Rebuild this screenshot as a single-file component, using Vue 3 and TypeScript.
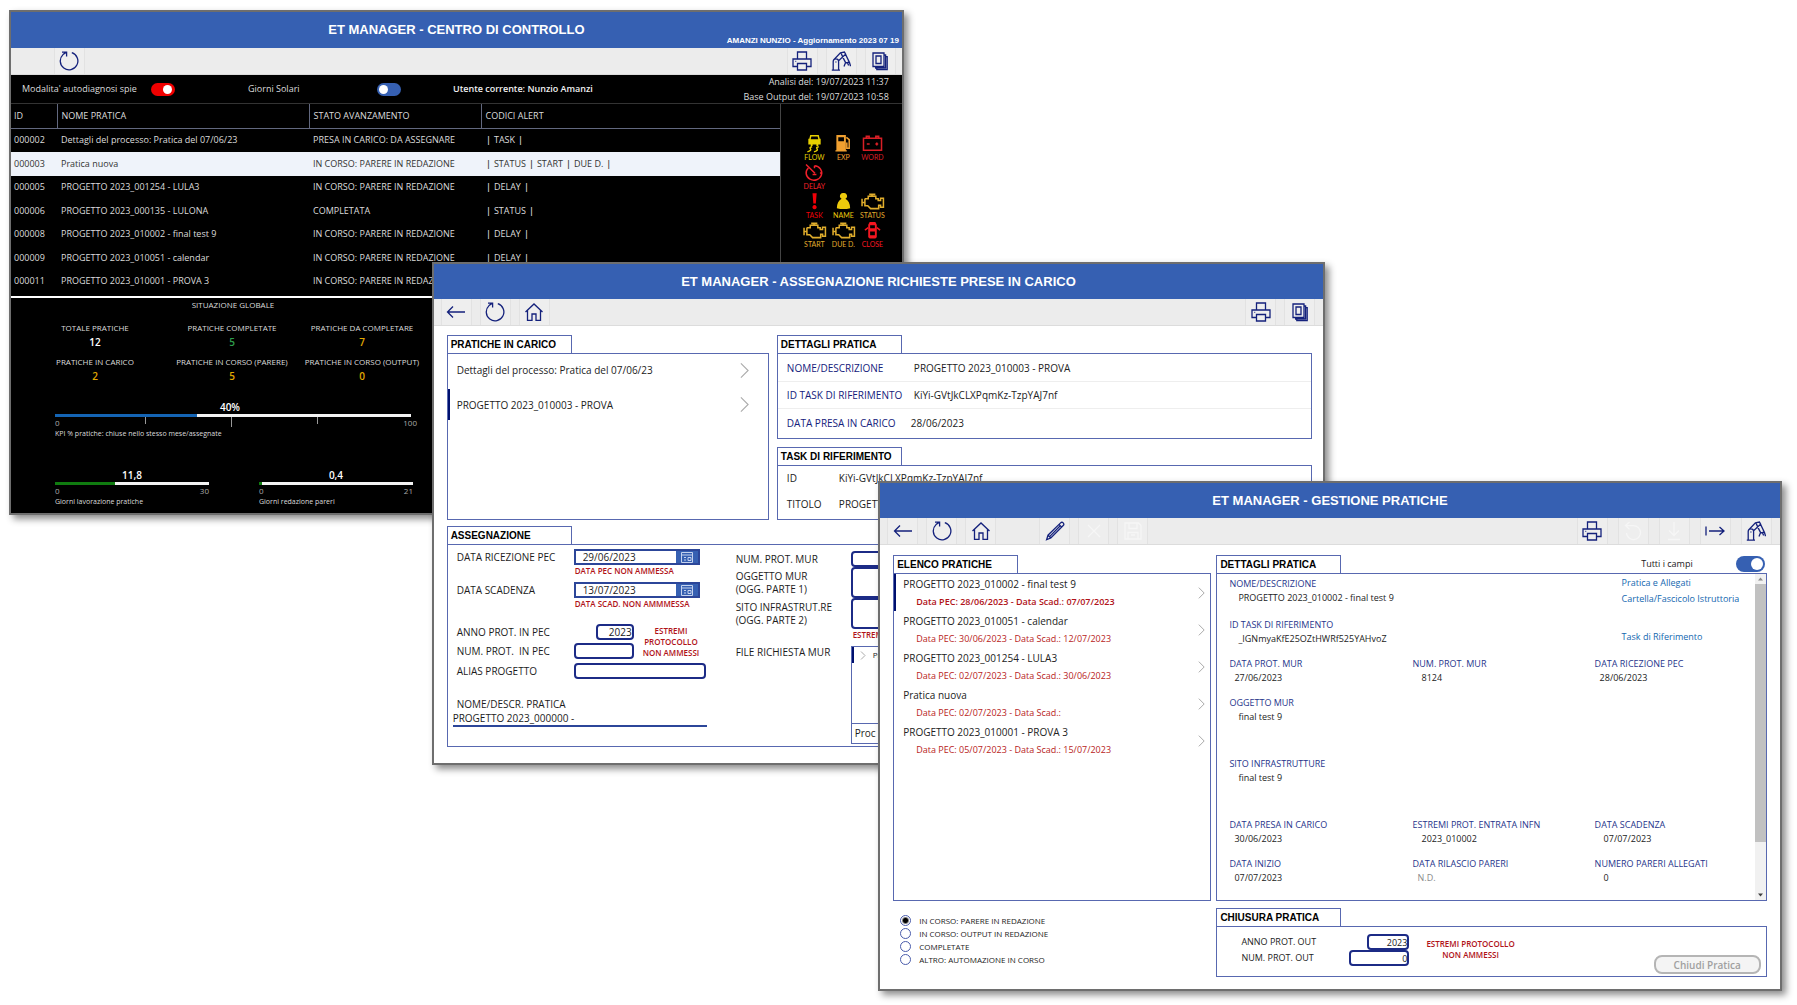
<script setup lang="ts">
import { ref } from 'vue'

const icons: Record<string, string> = {
  back: 'M19 10H1.5M7 4.5L1.5 10L7 15.5',
  refresh: 'M3 1.2h4.6v4.4M7.4 1.4Q5.5 2.3 4 3.6A8.8 8.8 0 1 0 12.8 1.6',
  home: 'M1.5 10L10 2L18.5 10M3.5 8.3V18.3H8V12H12V18.3H16.5V8.3',
  print: 'M5.5 8V1H14.5V8M5.5 15.5H1V8H19V15.5H14.5M5.5 12.5H14.5V19H5.5ZM3.4 10.3h.8',
  robot: 'M.8 19.2H9M2.2 19V10.6a2.7 2.7 0 0 1 5.4 0V19M4.9 10.6v1M2.6 9L9.4 1.8L13.4 1L14.6 3.2L7.6 9.8M9.8 1.8L11.6 5.6M11.4 5.4L14.6 11.6M14.4 3L18.4 11.4M14.2 11.8L18.6 11.2M14.6 11.6L13 15.4M16.4 11.6L17.6 14.6M18.4 11.2L19.6 15.2',
  pages: 'M3 2H14V15.5H3ZM6 5H11V12.5H6ZM14 4H15.6V17H5M15.6 5.6H17.2V18.6H6.8V17',
  edit: 'M1.6 18.6L3 14.2L15.6 1.9a1.8 1.8 0 0 1 2.6 2.6L5.8 17ZM3 14.2L5.8 17M14 3.4L16.7 6.1M4.6 15.6L15 5',
  close: 'M4 4L16 16M16 4L4 16',
  save: 'M2 2H15.5L18 4.5V18H2ZM6 2V7.5H14V2M5 18V11.5H15V18M8 14h4',
  undo: 'M6.5 1L2.5 4.6L6.5 8.2M2.5 4.6H10.5a7 7 0 1 1-7 7.4',
  download: 'M10 1V14.5M5 9.5L10 14.5L15 9.5M4 18.5H16',
  exit: 'M1 5.5V14.5M4 10H19M14.5 6L19 10L14.5 14',
}

interface Tool { icon: string; label: string; off?: boolean; gap?: boolean }
const print: Tool = { icon: 'print', label: 'Stampa' }
const robot: Tool = { icon: 'robot', label: 'Automazione' }
const pages: Tool = { icon: 'pages', label: 'Documenti' }
const refresh: Tool = { icon: 'refresh', label: 'Aggiorna' }
const nav: Tool[] = [{ icon: 'back', label: 'Indietro' }, refresh, { icon: 'home', label: 'Home' }]
const controlTools: Tool[] = [print, robot, pages]
const assignTools: Tool[] = [print, pages]
const manageTools: Tool[] = [
  ...nav,
  { icon: 'edit', label: 'Modifica', gap: true },
  { icon: 'close', label: 'Annulla', off: true },
  { icon: 'save', label: 'Salva', off: true },
]
const manageRight: Tool[] = [
  print,
  { icon: 'undo', label: 'Ripristina', off: true },
  { icon: 'download', label: 'Scarica', off: true },
  { icon: 'exit', label: 'Esci' },
  robot,
]

const rows = [
  { id: '000002', name: 'Dettagli del processo: Pratica del 07/06/23', state: 'PRESA IN CARICO: DA ASSEGNARE', codes: ['TASK'] },
  { id: '000003', name: 'Pratica nuova', state: 'IN CORSO: PARERE IN REDAZIONE', codes: ['STATUS', 'START', 'DUE D.'] },
  { id: '000005', name: 'PROGETTO 2023_001254 - LULA3', state: 'IN CORSO: PARERE IN REDAZIONE', codes: ['DELAY'] },
  { id: '000006', name: 'PROGETTO 2023_000135 - LULONA', state: 'COMPLETATA', codes: ['STATUS'] },
  { id: '000008', name: 'PROGETTO 2023_010002 - final test 9', state: 'IN CORSO: PARERE IN REDAZIONE', codes: ['DELAY'] },
  { id: '000009', name: 'PROGETTO 2023_010051 - calendar', state: 'IN CORSO: PARERE IN REDAZIONE', codes: ['DELAY'] },
  { id: '000011', name: 'PROGETTO 2023_010001 - PROVA 3', state: 'IN CORSO: PARERE IN REDAZIONE', codes: [] },
]

const engine = 'M5 7H8V4.5H16V7H18.5V9H21V6.5H24V16H21V14H19V17.5H10.5L7.5 14.5H4.5V7.6ZM1.5 7V15M1.5 11H4.5M9 2.5H15.5M12 2.5V4.5'
const lamps = [
  { name: 'FLOW', color: '#e6cf00', fill: 'M8 1H17L18 5H19V11H16.5V12.5H14.5V11H10.5V12.5H8.5V11H6V5H7ZM8.5 5.5H16.5L15.8 2.5H9.2Z', line: 'M10 13.5C4 15 13 16 5 18.8M17 13.5C11 15 20 16 12 18.8' },
  { name: 'EXP', color: '#f0a030', fill: 'M5 1H15V17H16V18.5H4V17H5ZM7 3.5V7.5H13V3.5Z', line: 'M15.5 3.5L18.5 6V15H16V9' },
  { name: 'WORD', color: '#d81f26', fill: '', line: 'M3 4.5H22V17H3ZM6 4V2.5H9V4M16 4V2.5H19V4M6.5 10.5H9.5M15.5 10.5H18.5M17 9V12' },
  { name: 'DELAY', color: '#f0202a', fill: '', line: 'M6 5.2A8.2 7.6 0 1 0 12.5 2.9M13 10.8L3.6 1.6M12.5 3V5.4M20.5 10.5H18.2M10.5 12.2h4' },
  null,
  null,
  { name: 'TASK', color: '#f00008', fill: 'M10.4 1.2H14.8L13.9 12H11.3ZM12.6 13.8A2.2 2.2 0 1 1 12.5 13.8Z', line: '' },
  { name: 'NAME', color: '#ecc90c', fill: 'M12.5 1A3.2 3.2 0 0 1 14.5 7C17.5 8.5 19.5 12 19.5 17Q12.5 19 5.5 17C5.5 12 7.5 8.5 10.5 7A3.2 3.2 0 0 1 12.5 1Z', line: '' },
  { name: 'STATUS', color: '#e0ad2c', fill: '', line: engine },
  { name: 'START', color: '#e0ad2c', fill: '', line: engine },
  { name: 'DUE D.', color: '#e0ad2c', fill: '', line: engine },
  { name: 'CLOSE', color: '#f41620', fill: 'M9.5 1H15.5L17 4V17L15.5 18.5H9.5L8 17V4ZM10 4.5V7.5H15V4.5ZM10 11V15H15V11Z', line: 'M8 7L4.5 9.5M17 7L20.5 9.5' },
]

const totals = [
  { label: 'TOTALE PRATICHE', value: '12', tone: 'plain' },
  { label: 'PRATICHE COMPLETATE', value: '5', tone: 'good' },
  { label: 'PRATICHE DA COMPLETARE', value: '7', tone: 'warn' },
  { label: 'PRATICHE IN CARICO', value: '2', tone: 'warn' },
  { label: 'PRATICHE IN CORSO (PARERE)', value: '5', tone: 'warn' },
  { label: 'PRATICHE IN CORSO (OUTPUT)', value: '0', tone: 'warn' },
]
const meters = [
  { value: '11,8', share: 39, max: '30', label: 'Giorni lavorazione pratiche' },
  { value: '0,4', share: 2, max: '21', label: 'Giorni redazione pareri' },
]

const practices = [
  { name: 'PROGETTO 2023_010002 - final test 9', dates: 'Data PEC: 28/06/2023 - Data Scad.: 07/07/2023' },
  { name: 'PROGETTO 2023_010051 - calendar', dates: 'Data PEC: 30/06/2023 - Data Scad.: 12/07/2023' },
  { name: 'PROGETTO 2023_001254 - LULA3', dates: 'Data PEC: 02/07/2023 - Data Scad.: 30/06/2023' },
  { name: 'Pratica nuova', dates: 'Data PEC: 02/07/2023 - Data Scad.:' },
  { name: 'PROGETTO 2023_010001 - PROVA 3', dates: 'Data PEC: 05/07/2023 - Data Scad.: 15/07/2023' },
]
const states = ['IN CORSO: PARERE IN REDAZIONE', 'IN CORSO: OUTPUT IN REDAZIONE', 'COMPLETATE', 'ALTRO: AUTOMAZIONE IN CORSO']

const selfCheck = ref(true)
const solarDays = ref(false)
const allFields = ref(true)
const picked = ref(states[0])
const pecDate = ref('29/06/2023')
const dueDate = ref('13/07/2023')
const yearIn = ref('2023')
const yearOut = ref('2023')
const numberOut = ref('0')
</script>

<template>
  <main class="desktop">
    <!-- Centro di controllo -->
    <section class="window control">
      <header class="title-bar">
        <h1>ET MANAGER - CENTRO DI CONTROLLO</h1>
        <span class="release">AMANZI NUNZIO - Aggiornamento 2023 07 19</span>
      </header>
      <div class="toolbar">
        <button class="tool" :aria-label="refresh.label"><svg viewBox="0 0 20 20"><path :d="icons.refresh" /></svg></button>
        <span class="spring"></span>
        <button v-for="t in controlTools" :key="t.icon" class="tool" :aria-label="t.label"><svg viewBox="0 0 20 20"><path :d="icons[t.icon]" /></svg></button>
      </div>
      <div class="info">
        <label class="info-check" for="self">Modalita' autodiagnosi spie</label>
        <input id="self" v-model="selfCheck" class="toggle alarm" type="checkbox">
        <label class="info-days" for="solar">Giorni Solari</label>
        <input id="solar" v-model="solarDays" class="toggle" type="checkbox">
        <strong class="user">Utente corrente: Nunzio Amanzi</strong>
        <p class="stamps">Analisi del: 19/07/2023 11:37<br>Base Output del: 19/07/2023 10:58</p>
      </div>
      <div class="board">
        <table class="grid">
          <colgroup><col class="c-id"><col class="c-name"><col class="c-state"><col></colgroup>
          <thead><tr><th>ID</th><th>NOME PRATICA</th><th>STATO AVANZAMENTO</th><th>CODICI ALERT</th></tr></thead>
          <tbody>
            <tr v-for="(r, i) in rows" :key="r.id" :class="{ chosen: i === 1 }">
              <td>{{ r.id }}</td><td>{{ r.name }}</td><td>{{ r.state }}</td>
              <td><span v-if="r.codes.length" class="codes"><b>|</b><template v-for="c in r.codes" :key="c"><span>{{ c }}</span><b>|</b></template></span></td>
            </tr>
          </tbody>
        </table>
        <div class="lamps">
          <div v-for="(l, i) in lamps" :key="i" class="lamp">
            <template v-if="l">
              <svg viewBox="0 0 25 20" :fill="l.color" :stroke="l.color">
                <path v-if="l.fill" :d="l.fill" fill-rule="evenodd" stroke="none" />
                <path v-if="l.line" :d="l.line" fill="none" stroke-width="1.6" />
              </svg>
              <span :style="{ color: l.color }">{{ l.name }}</span>
            </template>
          </div>
        </div>
      </div>
      <div class="summary">
        <h2>SITUAZIONE GLOBALE</h2>
        <dl class="totals">
          <div v-for="t in totals" :key="t.label"><dt>{{ t.label }}</dt><dd :class="t.tone">{{ t.value }}</dd></div>
        </dl>
        <div class="meter kpi">
          <b>40%</b>
          <div class="track"><i class="fill" :style="{ width: '40%' }"></i></div>
          <div class="scale"><span>0</span><i></i><i class="mid"></i><i></i><span>100</span></div>
          <p>KPI % pratiche: chiuse nello stesso mese/assegnate</p>
        </div>
        <div class="pair">
          <div v-for="m in meters" :key="m.label" class="meter">
            <b>{{ m.value }}</b>
            <div class="track"><i class="fill green" :style="{ width: m.share + '%' }"></i></div>
            <div class="scale"><span>0</span><span>{{ m.max }}</span></div>
            <p>{{ m.label }}</p>
          </div>
        </div>
      </div>
    </section>

    <!-- Assegnazione richieste -->
    <section class="window assign">
      <header class="title-bar"><h1>ET MANAGER - ASSEGNAZIONE RICHIESTE PRESE IN CARICO</h1></header>
      <div class="toolbar">
        <button v-for="t in nav" :key="t.icon" class="tool" :aria-label="t.label"><svg viewBox="0 0 20 20"><path :d="icons[t.icon]" /></svg></button>
        <span class="spring"></span>
        <button v-for="t in assignTools" :key="t.icon" class="tool" :aria-label="t.label"><svg viewBox="0 0 20 20"><path :d="icons[t.icon]" /></svg></button>
      </div>
      <div class="body">
        <div class="split">
          <section class="panel">
            <h2 class="tab">PRATICHE IN CARICO</h2>
            <ul class="box taken">
              <li>Dettagli del processo: Pratica del 07/06/23<svg class="chevron" viewBox="0 0 10 18"><path d="M1 1L9 9L1 17" /></svg></li>
              <li class="on">PROGETTO 2023_010003 - PROVA<svg class="chevron" viewBox="0 0 10 18"><path d="M1 1L9 9L1 17" /></svg></li>
            </ul>
          </section>
          <div class="stack">
            <section class="panel">
              <h2 class="tab">DETTAGLI PRATICA</h2>
              <dl class="box facts">
                <div><dt>NOME/DESCRIZIONE</dt><dd>PROGETTO 2023_010003 - PROVA</dd></div>
                <div><dt>ID TASK DI RIFERIMENTO</dt><dd>KiYi-GVtJkCLXPqmKz-TzpYAJ7nf</dd></div>
                <div><dt>DATA PRESA IN CARICO</dt><dd>28/06/2023</dd></div>
              </dl>
            </section>
            <section class="panel">
              <h2 class="tab">TASK DI RIFERIMENTO</h2>
              <dl class="box task">
                <div><dt>ID</dt><dd>KiYi-GVtJkCLXPqmKz-TzpYAJ7nf</dd></div>
                <div><dt>TITOLO</dt><dd>PROGETTO</dd></div>
              </dl>
            </section>
          </div>
        </div>
        <section class="panel">
          <h2 class="tab">ASSEGNAZIONE</h2>
          <form class="box form" @submit.prevent>
            <div class="form-left">
              <div class="field">
                <label for="pec">DATA RICEZIONE PEC</label>
                <span class="date"><input id="pec" v-model="pecDate" type="text"><button type="button" aria-label="Calendario"><svg viewBox="0 0 12 11"><path d="M.5.5H11.5V10.5H.5ZM.5 3H11.5M3 5.5H5M7 5.5H10V8.5H7ZM3 8H5" /></svg></button></span>
              </div>
              <p class="error">DATA PEC NON AMMESSA</p>
              <div class="field">
                <label for="due">DATA SCADENZA</label>
                <span class="date"><input id="due" v-model="dueDate" type="text"><button type="button" aria-label="Calendario"><svg viewBox="0 0 12 11"><path d="M.5.5H11.5V10.5H.5ZM.5 3H11.5M3 5.5H5M7 5.5H10V8.5H7ZM3 8H5" /></svg></button></span>
              </div>
              <p class="error">DATA SCAD. NON AMMMESSA</p>
              <div class="protocol">
                <div class="protocol-fields">
                  <div class="field"><label for="yin">ANNO PROT. IN PEC</label><input id="yin" v-model="yearIn" class="text year" type="text"></div>
                  <div class="field"><label for="nin">NUM. PROT.&nbsp; IN PEC</label><input id="nin" class="text number" type="text"></div>
                </div>
                <p class="error centred">ESTREMI<br>PROTOCOLLO<br>NON AMMESSI</p>
              </div>
              <div class="field"><label for="alias">ALIAS PROGETTO</label><input id="alias" class="text alias" type="text"></div>
              <p class="caption">NOME/DESCR. PRATICA</p>
              <p class="result">PROGETTO 2023_000000 -</p>
            </div>
            <div class="form-right">
              <div class="field"><label for="nmur">NUM. PROT. MUR</label><input id="nmur" class="text" type="text"></div>
              <div class="field tall"><label for="omur">OGGETTO MUR<br>(OGG. PARTE 1)</label><textarea id="omur" class="text"></textarea></div>
              <div class="field tall"><label for="site">SITO INFRASTRUT.RE<br>(OGG. PARTE 2)</label><textarea id="site" class="text"></textarea></div>
              <p class="error">ESTREMI</p>
              <div class="field files">
                <span class="label">FILE RICHIESTA MUR</span>
                <div class="file-box">
                  <div class="file"><svg class="chevron" viewBox="0 0 10 18"><path d="M1 1L9 9L1 17" /></svg>Pr</div>
                  <div class="file-foot">Proc</div>
                </div>
              </div>
            </div>
          </form>
        </section>
      </div>
    </section>

    <!-- Gestione pratiche -->
    <section class="window manage">
      <header class="title-bar"><h1>ET MANAGER - GESTIONE PRATICHE</h1></header>
      <div class="toolbar">
        <button v-for="t in manageTools" :key="t.icon" class="tool" :class="{ off: t.off, apart: t.gap }" :disabled="t.off" :aria-label="t.label"><svg viewBox="0 0 20 20"><path :d="icons[t.icon]" /></svg></button>
        <span class="spring"></span>
        <button v-for="t in manageRight" :key="t.icon" class="tool" :class="{ off: t.off }" :disabled="t.off" :aria-label="t.label"><svg viewBox="0 0 20 20"><path :d="icons[t.icon]" /></svg></button>
      </div>
      <div class="body split">
        <div>
          <section class="panel">
            <h2 class="tab">ELENCO PRATICHE</h2>
            <ul class="box practices">
              <li v-for="(p, i) in practices" :key="p.name" :class="{ on: i === 0 }">
                <div><p>{{ p.name }}</p><small>{{ p.dates }}</small></div>
                <svg class="chevron" viewBox="0 0 10 18"><path d="M1 1L9 9L1 17" /></svg>
              </li>
            </ul>
          </section>
          <div class="states">
            <label v-for="s in states" :key="s"><input v-model="picked" type="radio" name="state" :value="s">{{ s }}</label>
          </div>
        </div>
        <div class="stack">
          <section class="panel">
            <div class="tab-row">
              <h2 class="tab">DETTAGLI PRATICA</h2>
              <label for="all">Tutti i campi</label>
              <input id="all" v-model="allFields" class="toggle big" type="checkbox">
            </div>
            <div class="box details">
              <dl class="records">
                <div class="wide"><dt>NOME/DESCRIZIONE</dt><dd>PROGETTO 2023_010002 - final test 9</dd></div>
                <div class="links"><a href="#">Pratica e Allegati</a><a href="#">Cartella/Fascicolo Istruttoria</a></div>
                <div class="wide"><dt>ID TASK DI RIFERIMENTO</dt><dd>_IGNmyaKfE25OZtHWRf525YAHvoZ</dd></div>
                <div class="links low"><a href="#">Task di Riferimento</a></div>
                <div><dt>DATA PROT. MUR</dt><dd class="near">27/06/2023</dd></div>
                <div><dt>NUM. PROT. MUR</dt><dd>8124</dd></div>
                <div><dt>DATA RICEZIONE PEC</dt><dd class="near">28/06/2023</dd></div>
                <div class="full"><dt>OGGETTO MUR</dt><dd>final test 9</dd></div>
                <div class="full"><dt>SITO INFRASTRUTTURE</dt><dd>final test 9</dd></div>
                <div><dt>DATA PRESA IN CARICO</dt><dd class="near">30/06/2023</dd></div>
                <div><dt>ESTREMI PROT. ENTRATA INFN</dt><dd>2023_010002</dd></div>
                <div><dt>DATA SCADENZA</dt><dd>07/07/2023</dd></div>
                <div><dt>DATA INIZIO</dt><dd class="near">07/07/2023</dd></div>
                <div><dt>DATA RILASCIO PARERI</dt><dd class="near none">N.D.</dd></div>
                <div><dt>NUMERO PARERI ALLEGATI</dt><dd>0</dd></div>
              </dl>
              <div class="scroll" aria-hidden="true">
                <svg viewBox="0 0 11 10"><path d="M5.5 3.5L8 6.5H3Z" fill="#8a8a8a" /></svg>
                <i></i>
                <svg viewBox="0 0 11 10"><path d="M5.5 6.5L8 3.5H3Z" fill="#404040" /></svg>
              </div>
            </div>
          </section>
          <section class="panel">
            <h2 class="tab">CHIUSURA PRATICA</h2>
            <form class="box closing" @submit.prevent>
              <div class="out">
                <div class="field"><label for="yout">ANNO PROT. OUT</label><input id="yout" v-model="yearOut" class="text year" type="text"></div>
                <div class="field"><label for="nout">NUM. PROT. OUT</label><input id="nout" v-model="numberOut" class="text number" type="text"></div>
              </div>
              <p class="error centred">ESTREMI PROTOCOLLO<br>NON AMMESSI</p>
              <button class="close-btn" type="button" disabled>Chiudi Pratica</button>
            </form>
          </section>
        </div>
      </div>
    </section>
  </main>
</template>

<style>
body { margin: 0; background: #fff; }
</style>

<style scoped>
* { box-sizing: border-box; }
h1, h2, p, dl, dd, ul { margin: 0; padding: 0; }
ul { list-style: none; }
button, input, textarea { font: inherit; color: inherit; margin: 0; padding: 0; }

.desktop {
  position: relative;
  min-height: 100vh;
  overflow: hidden;
  font-family: "Open Sans", "Noto Sans", sans-serif;
  font-size: 9px;
  line-height: 14px;
  color: #222;
}

.window {
  position: absolute;
  background: #fff;
  border: 2px solid #6e6e6e;
  box-shadow: 4px 4px 7px rgba(0, 0, 0, .45);
}
.control { left: .5%; top: 10px; width: 49.8%; color: #dcdcdc; background: #000; }
.assign { left: 24.02%; top: 262px; width: 49.73%; }
.manage { left: 48.87%; top: 481px; width: 50.28%; }

.title-bar {
  display: grid;
  grid-template-columns: 1fr auto 1fr;
  align-items: center;
  height: 36px;
  background: #3660b2;
  color: #fff;
  font-family: "Liberation Sans", Arial, sans-serif;
}
.assign .title-bar, .manage .title-bar { height: 35px; }
h1 { grid-column: 2; font-size: 13px; line-height: 16px; font-weight: 700; white-space: nowrap; }
.release { justify-self: end; align-self: end; padding-right: 3px; font-size: 8px; line-height: 14px; font-weight: 700; white-space: nowrap; }

.toolbar {
  display: flex;
  gap: 8px;
  height: 27px;
  padding: 0 8px 0 7px;
  background: #ececec;
  border-bottom: 1px solid #dcdcdc;
}
.control .toolbar { padding: 0 6px 0 43px; }
.spring { flex: 1; }
.tool {
  display: flex;
  align-items: center;
  justify-content: center;
  width: 31px;
  border: solid #e2e2e2;
  border-width: 0 1px;
  background: #eee;
}
.tool svg { width: 20px; height: 20px; fill: none; stroke: #14217c; stroke-width: 1.3; }
.tool.off svg { stroke: #f6f6f6; }
.tool.apart { margin-left: 35px; }

.toggle {
  appearance: none;
  display: block;
  width: 24px;
  height: 13px;
  border-radius: 7px;
  background: #3660b2;
}
.toggle::before {
  content: "";
  display: block;
  width: 9px;
  height: 9px;
  margin: 2px;
  border-radius: 50%;
  background: #fff;
}
.toggle:checked::before { margin-left: 12px; }
.toggle.alarm:checked { background: #f00000; }
.toggle.big { width: 29px; height: 16px; border-radius: 8px; }
.toggle.big::before { width: 12px; height: 12px; }
.toggle.big:checked::before { margin-left: 15px; }

/* control centre */
.info { display: flex; align-items: center; height: 28px; padding: 0 13px 0 11px; }
.info-check { width: 129px; white-space: nowrap; }
.info-days { margin-left: 73px; width: 129px; }
.user { margin-left: 52px; font-weight: 600; color: #f0f0f0; white-space: nowrap; }
.stamps { margin-left: auto; text-align: right; line-height: 15px; white-space: nowrap; }
.board { display: flex; border-top: 1px solid #333; border-bottom: 2px solid #fff; }
.grid { flex: 1; height: 189px; margin-bottom: 3px; border-collapse: collapse; table-layout: fixed; }
.c-id { width: 47px; }
.c-name { width: 252px; }
.c-state { width: 172px; }
.grid th, .grid td { padding: 0 3px; text-align: left; font-weight: 400; white-space: nowrap; line-height: 14px; }
.grid th { height: 24px; border-bottom: 1px solid #62687f; }
.grid th + th { border-left: 1px solid #62687f; }
.codes { display: flex; gap: 3px; padding-left: 1px; }
.codes b { font-weight: 600; }
.chosen { background: #eff3fa; color: #333; }
.lamps {
  display: grid;
  grid-template-columns: repeat(3, 29px);
  grid-auto-rows: 29px;
  justify-content: center;
  width: 122px;
  padding: 30px 0 0 4px;
  border-left: 1px solid #444;
}
.lamp { display: flex; flex-direction: column; align-items: center; font-family: Lato, sans-serif; font-size: 7px; line-height: 9px; white-space: nowrap; }
.lamp svg { width: 25px; height: 19px; }

.summary { width: 421px; height: 215px; padding-left: 19px; text-align: center; }
.summary h2 { padding-left: 4px; font-size: 8px; line-height: 14px; font-weight: 400; }
.totals { display: grid; grid-template-columns: 130px 144px 116px; padding-top: 9px; }
.totals div { height: 34px; white-space: nowrap; display: flex; flex-direction: column; align-items: center; }
.totals dt { font-size: 8px; }
.totals dd { font-size: 10px; font-weight: 600; }
.plain { color: #fff; }
.good { color: #2f9f4c; }
.warn { color: #e0a900; }
.meter b { display: block; font-size: 10px; line-height: 14px; font-weight: 600; color: #fff; }
.track { height: 3px; background: #f2f2f2; }
.fill { display: block; height: 3px; background: #1464b4; }
.fill.green { background: #107c10; }
.scale { display: flex; justify-content: space-between; font-size: 8px; line-height: 12px; color: #aaa; }
.scale i { width: 1px; height: 7px; background: #999; }
.scale .mid { height: 10px; }
.kpi .scale { margin-right: -6px; }
.meter p { text-align: left; font-size: 7px; line-height: 9px; }
.kpi { width: 356px; margin: 11px 0 0 25px; }
.kpi b { padding-right: 6px; }
.pair { display: flex; gap: 50px; padding: 30px 0 0 25px; }
.pair .meter { width: 154px; }

/* panels */
.body { padding: 9px 11px 16px 13px; }
.split { display: grid; grid-template-columns: 322fr 535fr; gap: 8px; }
.stack { display: flex; flex-direction: column; gap: 8px; }
.tab {
  width: 125px;
  height: 18px;
  padding-left: 3px;
  border: 1px solid #5868b0;
  border-bottom: 0;
  font-family: "Liberation Sans", Arial, sans-serif;
  font-size: 10px;
  line-height: 17px;
  font-weight: 700;
  color: #000;
  white-space: nowrap;
}
.box { border: 1px solid #5868b0; }
.chevron { width: 9px; height: 17px; fill: none; stroke: #aaa; stroke-width: 1.2; }

.assign { font-size: 10px; }
.taken { height: 167px; }
.taken li { display: flex; justify-content: space-between; align-items: center; height: 35px; padding: 0 19px 3px 7px; border-left: 2px solid transparent; }
.taken li + li { height: 31px; padding-bottom: 0; }
.taken .on { border-color: #00106e; font-weight: 500; }
.facts { height: 86px; }
.facts div { display: flex; align-items: center; height: 27px; padding-left: 9px; }
.facts div + div { border-top: 1px solid #eee; }
.facts dt { width: 127px; color: #14217c; }
.facts div:last-child { height: 28px; }
.facts div:last-child dt { width: 124px; }
.task { height: 55px; }
.task div { display: flex; height: 26px; padding: 5px 0 0 9px; }
.task dt { width: 52px; }
.assign .split { margin-bottom: 6px; }

.form { display: flex; height: 203px; padding: 4px 0 0 9px; color: #1c1c1c; }
.form-left { width: 279px; }
.form-right { flex: 1; padding-top: 2px; }
.field { display: flex; align-items: center; height: 16px; white-space: nowrap; }
.form-left label { width: 117px; }
.date { display: flex; width: 126px; height: 16px; border: 2px solid #2c4699; }
.date input { flex: 1; min-width: 0; border: 0; padding-left: 7px; background: none; }
.date button { display: flex; align-items: center; justify-content: center; width: 22px; border: 0; background: #3660b2; }
.date svg { width: 12px; height: 11px; fill: none; stroke: #c5d2ee; stroke-width: 1; }
.error { color: #b01218; font-size: 8px; line-height: 11px; font-weight: 600; white-space: nowrap; }
.form-left > .error { padding-left: 118px; height: 17px; }
.text { border: 2px solid #1c2b86; border-radius: 4px; background: #fff; text-align: right; resize: none; height: 16px; }
.protocol { display: flex; align-items: center; gap: 9px; padding-top: 9px; }
.protocol-fields { display: flex; flex-direction: column; gap: 3px; width: 177px; }
.protocol .year { width: 38px; margin-left: 22px; }
.protocol .number { width: 60px; }
.centred { text-align: center; }
.form-left > .field .alias { width: 132px; }
.protocol + .field { margin-top: 4px; }
.caption { margin-top: 18px; }
.result { width: 254px; margin-left: -4px; border-bottom: 2px solid #2c4699; }
.form-right .field label, .label { width: 115px; line-height: 13px; }
.form-right .text { flex: 1; }
.form-right .tall { height: 31px; }
.form-right .tall .text { height: 31px; }
.form-right .error { padding-left: 117px; }
.form-right .files { height: 100px; margin-top: 6px; align-items: flex-start; }
.file-box { flex: 1; height: 98px; border: 1px solid #5868b0; display: flex; flex-direction: column; justify-content: space-between; }
.file { display: flex; align-items: center; gap: 7px; height: 16px; padding-left: 6px; border-left: 2px solid #00106e; font-size: 8px; }
.file .chevron { width: 6px; height: 9px; stroke-width: 2; }
.file-foot { height: 20px; padding-left: 3px; line-height: 18px; border-top: 1px solid #5868b0; }

/* practice management */
.manage .toolbar { padding-right: 8px; }
.manage .spring ~ .tool { margin-left: 2px; }
.manage .split { grid-template-columns: 318fr 550fr; gap: 5px; padding: 10px 13px 12px; }
.practices { height: 328px; }
.practices li { display: flex; align-items: center; justify-content: space-between; height: 37px; padding: 0 5px 0 9px; }
.practices li > div { flex: 1; }
.practices .on { box-shadow: inset 2px 0 #00106e; }
.practices p { font-size: 10px; line-height: 19px; }
.practices small { display: block; padding-left: 13px; font-size: 9px; line-height: 16px; color: #b81c22; }
.practices .on small { font-weight: 600; color: #b01218; }
.practices .chevron { width: 7px; height: 12px; stroke-width: 1.5; }
.states { padding: 13px 0 0 7px; font-size: 8px; }
.states label { display: flex; align-items: center; gap: 8px; height: 13px; }
.states input { appearance: none; width: 11px; height: 11px; border: 1px solid #4a5cab; border-radius: 50%; background: #fff; }
.states input:checked { background: radial-gradient(circle, #000 2px, #fff 4px); }
.tab-row { display: flex; align-items: center; }
.tab-row label { margin-left: auto; margin-right: 43px; }
.tab-row .toggle { margin-right: 2px; }
.details { display: flex; height: 328px; }
.records { flex: 1; display: grid; grid-template-columns: 183fr 182fr 160fr; align-content: start; row-gap: 11px; padding: 3px 0 0 12px; color: #222; white-space: nowrap; }
.records > div { min-height: 28px; }
.records dt { color: #27358c; line-height: 14px; }
.records dd { padding-left: 9px; line-height: 14px; }
.records .near { padding-left: 5px; }
.records .none { color: #8a8a8a; }
.records .wide { grid-column: 1 / 3; }
.records .full { grid-column: 1 / -1; min-height: 50px; }
.links { display: flex; flex-direction: column; padding-left: 27px; line-height: 16px; margin-top: -2px; }
.links.low { padding-top: 13px; }
.links a { color: #1468b0; text-decoration: none; }
.scroll { display: flex; flex-direction: column; width: 11px; background: #f1f1f1; }
.scroll svg { width: 11px; height: 10px; }
.scroll i { height: 258px; margin-bottom: auto; background: #c1c1c1; }
.closing { display: flex; height: 51px; padding: 7px 5px 0 24px; }
.manage .stack { gap: 7px; }
.out { width: 168px; }
.out .field { justify-content: space-between; }
.out .year { width: 42px; }
.out .number { width: 60px; }
.closing .error { padding: 4px 0 0 17px; }
.close-btn { align-self: end; width: 107px; height: 19px; margin: 0 0 2px auto; border: 2px solid #b5b5b5; border-radius: 8px; background: #f4f4f4; color: #a0a0a0; font-size: 10px; line-height: 14px; font-weight: 600; }
</style>
